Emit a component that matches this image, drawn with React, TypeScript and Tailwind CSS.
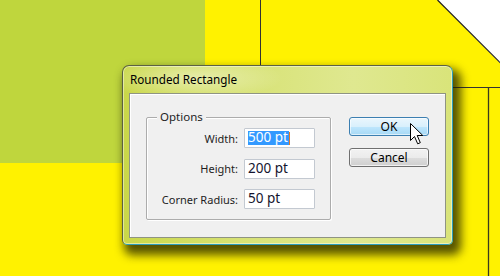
import React from "react";

function Cursor() {
  return (
    <svg width="17" height="25" viewBox="0 0 17 25" className="absolute left-[409px] top-[122px]">
      <path
        d="M1.5 1.5 L1.5 18.5 L5.5 14.5 L8.7 21.8 L11.3 20.7 L8.2 13.5 L13.8 13.5 Z"
        fill="#fff"
        stroke="#000"
        strokeWidth="1"
        strokeLinejoin="miter"
      />
    </svg>
  );
}

function Field({ label, value, selected }: { label: string; value: string; selected?: boolean }) {
  return (
    <div className="flex items-center gap-[6px]">
      <span className="text-[11px] leading-none text-[#1e1e1e]">{label}</span>
      <div className="w-[71px] h-[20px] border border-[#c3c9d1] rounded-[1px] bg-white pl-[3px] flex items-center text-[13.5px] leading-none text-[#14142e]">
        {selected ? (
          <>
            <span className="bg-[#3399ff] text-white h-[14px] flex items-center pr-[1px]">{value}</span>
            <span className="w-px h-[13px] bg-[#e07a2a]" />
          </>
        ) : (
          <span>{value}</span>
        )}
      </div>
    </div>
  );
}

export default function App() {
  return (
    <div className="relative w-[500px] h-[276px] overflow-hidden bg-[#fff200] font-['Noto_Sans','Open_Sans',sans-serif]">
      {/* artboard objects */}
      <div className="absolute left-0 top-0 w-[205px] h-[163px] bg-[#bfd63d]" />
      <svg className="absolute inset-0" width="500" height="276">
        <polygon points="437.5,0 500,0 500,63" fill="#fff" />
        <line x1="437.5" y1="0" x2="500.5" y2="63" stroke="#1c1c1c" strokeWidth="1.2" />
        <line x1="260.5" y1="0" x2="260.5" y2="120" stroke="#333" />
        <line x1="440" y1="87.5" x2="500" y2="87.5" stroke="#333" />
        <line x1="488.5" y1="87" x2="488.5" y2="276" stroke="#3a3a1e" strokeWidth="1.3" />
      </svg>

      {/* dialog window */}
      <div className="absolute left-[122px] top-[65px] w-[331px] h-[180px] rounded-t-[7px] rounded-b-[5px] border border-[#5c6242] border-r-[#2a9cbc] border-b-[#2a9cbc] bg-[radial-gradient(ellipse_90px_22px_at_70px_12px,rgba(255,255,255,0.45),transparent),linear-gradient(90deg,#c9d748_0%,#d7e274_35%,#dfe890_70%,#d9e47a_100%)] shadow-[5px_7px_10px_3px_rgba(30,30,0,0.75),inset_0_0_0_1px_rgba(255,255,255,0.45)] flex flex-col">
        <div className="h-[27px] pl-[7px] pt-[5px] text-[11.7px] leading-[16px] text-black">Rounded Rectangle</div>
        <div className="flex-1 mx-[6px] mb-[6px] border border-[#8f9483] bg-[#f0f0f0] shadow-[inset_1px_1px_0_#fff] flex gap-[18px] pl-[16px] pt-[23px]">
          <div className="relative w-[185px] h-[103px] border border-[#acacac] rounded-[2px] shadow-[inset_1px_1px_0_#fff,1px_1px_0_#fff]">
            <span className="absolute left-[10px] -top-[9px] px-[3px] bg-[#f0f0f0] text-[11.5px] leading-[16px] text-[#1e1e1e]">Options</span>
            <div className="flex flex-col items-end pr-[15px] pt-[10px] gap-[10.5px]">
              <Field label="Width:" value="500 pt" selected />
              <Field label="Height:" value="200 pt" />
              <Field label="Corner Radius:" value="50 pt" />
            </div>
          </div>
          <div className="flex flex-col gap-[12px] w-[80px]">
            <button className="h-[19px] rounded-[3px] border border-[#3c7fb1] bg-[linear-gradient(180deg,#eaf6fd_0%,#d9f0fc_50%,#bee6fd_51%,#a7d9f5_100%)] shadow-[inset_0_0_0_1px_rgba(255,255,255,0.6)] text-[12px] leading-none text-black">
              OK
            </button>
            <button className="h-[19px] rounded-[3px] border border-[#707070] bg-[linear-gradient(180deg,#f2f2f2_0%,#ebebeb_50%,#dddddd_51%,#cfcfcf_100%)] shadow-[inset_0_0_0_1px_rgba(255,255,255,0.7)] text-[12px] leading-none text-black">
              Cancel
            </button>
          </div>
        </div>
      </div>

      <Cursor />
    </div>
  );
}
